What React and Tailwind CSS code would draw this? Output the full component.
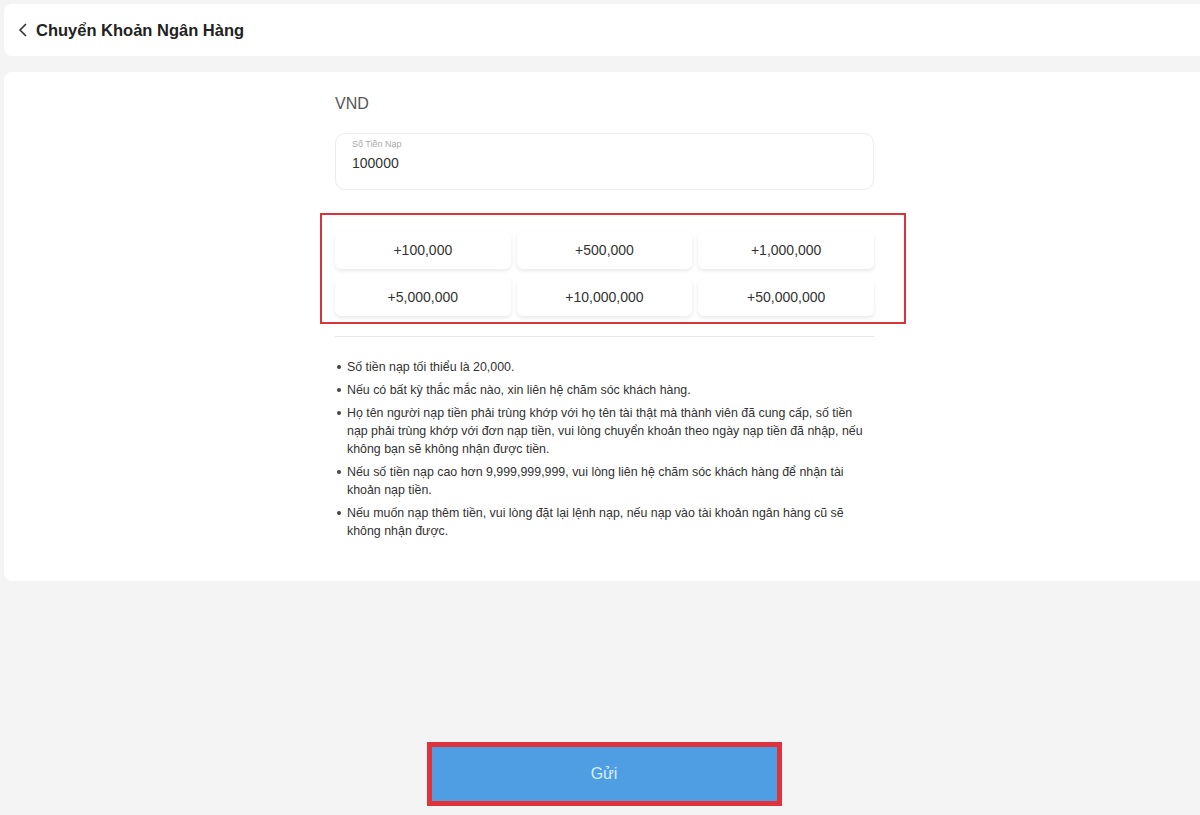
const amounts = ['+100,000', '+500,000', '+1,000,000', '+5,000,000', '+10,000,000', '+50,000,000']

const notes = [
  'Số tiền nạp tối thiểu là 20,000.',
  'Nếu có bất kỳ thắc mắc nào, xin liên hệ chăm sóc khách hàng.',
  'Họ tên người nạp tiền phải trùng khớp với họ tên tài thật mà thành viên đã cung cấp, số tiền nạp phải trùng khớp với đơn nạp tiền, vui lòng chuyển khoản theo ngày nạp tiền đã nhập, nếu không bạn sẽ không nhận được tiền.',
  'Nếu số tiền nạp cao hơn 9,999,999,999, vui lòng liên hệ chăm sóc khách hàng để nhận tài khoản nạp tiền.',
  'Nếu muốn nạp thêm tiền, vui lòng đặt lại lệnh nạp, nếu nạp vào tài khoản ngân hàng cũ sẽ không nhận được.'
]

export default function App() {
  return (
    <div
      className="min-h-[815px] bg-[#f4f4f4] pl-1 pt-1 flex flex-col overflow-hidden"
      style={{ fontFamily: '"Liberation Sans", Arial, sans-serif' }}
    >
      {/* Header */}
      <div className="h-[52px] bg-white rounded-l-lg flex items-center pl-[14px] gap-[8px]">
        <svg width="10" height="14" viewBox="0 0 10 14" fill="none" stroke="#333" strokeWidth="1.7" strokeLinecap="round" strokeLinejoin="round">
          <path d="M7.5 1.5 L2 7 L7.5 12.5" />
        </svg>
        <h1 className="text-[16.5px] font-bold text-[#222]">Chuyển Khoản Ngân Hàng</h1>
      </div>

      {/* Main card */}
      <div className="mt-4 h-[509px] bg-white rounded-l-lg">
        <div className="w-[539px] ml-[331px] pt-[23px]">
          <p className="text-[16px] text-[#555] leading-[18px]">VND</p>

          {/* Amount input */}
          <div className="mt-[20px] h-[57px] rounded-[10px] border border-[#ececec] px-[16px] pt-[4px]">
            <p className="text-[9px] text-[#aaa] leading-[12px]">Số Tiền Nạp</p>
            <p className="text-[14px] text-[#333] leading-[18px] mt-[4px]">100000</p>
          </div>

          {/* Quick amounts */}
          <div className="relative mt-[42px]">
            <div className="absolute -left-[15px] -right-[32px] -top-[19px] -bottom-[8px] border-2 border-[#d9333b] pointer-events-none" />
            <div className="grid grid-cols-3 gap-x-[6px] gap-y-[10px]">
              {amounts.map((a) => (
                <button
                  key={a}
                  className="h-[37px] bg-white rounded-md shadow-[0_2px_4px_rgba(0,0,0,0.09)] text-[14px] text-[#333]"
                >
                  {a}
                </button>
              ))}
            </div>
          </div>

          <div className="mt-[20px] border-t border-[#e6e6e6]" />

          {/* Notes */}
          <ul className="mt-[21px] flex flex-col gap-[5px] text-[12.4px] leading-[18px] text-[#333]">
            {notes.map((n, i) => (
              <li key={i} className="flex">
                <span className="w-[4px] h-[4px] rounded-full bg-[#444] mt-[7px] ml-[2px] mr-[6px] shrink-0" />
                <span>{n}</span>
              </li>
            ))}
          </ul>
        </div>
      </div>

      {/* Submit */}
      <div className="flex justify-center mt-[161px] pl-[4px]">
        <div className="border-[5px] border-[#e0323a] w-[355px]">
          <button className="w-full h-[54px] bg-[#4f9de3] text-[16px] text-[#d8efff]">Gửi</button>
        </div>
      </div>
    </div>
  )
}
